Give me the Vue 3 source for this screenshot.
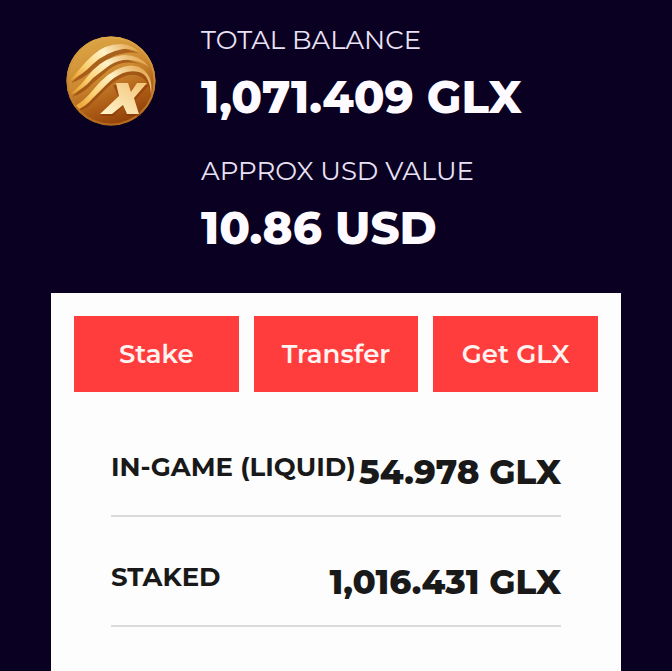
<!-- WalletBalance.vue -->
<template>
  <main class="wallet">
    <header class="wallet-header">
      <svg class="coin" viewBox="0 0 90 90" role="img" aria-label="GLX">
        <defs>
          <linearGradient id="coin-base" x1="0.2" y1="0" x2="0.6" y2="1">
            <stop offset="0" stop-color="#dda848" />
            <stop offset="0.45" stop-color="#cd8a30" />
            <stop offset="0.75" stop-color="#ad5c16" />
            <stop offset="1" stop-color="#8f3f08" />
          </linearGradient>
          <linearGradient id="coin-band" x1="0" y1="0.8" x2="1" y2="0.2">
            <stop offset="0" stop-color="#eda93a" />
            <stop offset="0.25" stop-color="#fbd275" />
            <stop offset="0.6" stop-color="#fff2c8" />
            <stop offset="1" stop-color="#e3a550" />
          </linearGradient>
          <linearGradient id="coin-rim" x1="0" y1="0" x2="0" y2="1">
            <stop offset="0" stop-color="#dca647" />
            <stop offset="1" stop-color="#b3691c" />
          </linearGradient>
          <linearGradient id="coin-mark" x1="0" y1="1" x2="1" y2="0">
            <stop offset="0" stop-color="#fff5cf" />
            <stop offset="1" stop-color="#f3c373" />
          </linearGradient>
        </defs>
        <circle cx="45" cy="45" r="44.5" fill="url(#coin-base)" />
        <g fill="#8f3f0a" opacity="0.6">
          <path d="M5 47Q16 36 27 26Q40 14 57 12L73 17Q58 15 46 21Q36 26 27 34Q17 43 5 47Z" />
          <path d="M6 61Q17 52 27 40Q40 27 57 22L82 31Q68 25 57 27Q47 29 40 36L27 47Q18 57 6 61Z" />
          <path d="M12 75Q21 68 27 60Q41 43 57 35L73 34Q83 38 85 58Q81 42 73 40Q65 37 57 41Q49 44 40 53L27 66Q21 73 12 75Z" />
        </g>
        <g fill="url(#coin-band)">
          <path d="M5 44Q15 30 27 19Q40 7 57 8Q67 9 74 17Q66 12 57 13Q40 16 27 28Q15 40 5 44Z" />
          <path d="M5 58Q17 47 27 34Q40 21 57 19Q73 18 83 31Q71 22 57 24Q47 26 40 32L27 42Q17 54 5 58Z" />
          <path d="M9 70Q18 65 27 54Q41 36 57 31Q66 28 73 31Q88 38 85 59Q84 39 73 36Q65 34 57 37Q49 40 40 49L27 62Q20 70 13 73Z" />
        </g>
        <circle cx="45" cy="45" r="43.5" fill="none" stroke="url(#coin-rim)" stroke-width="2" />
        <path
          d="M47 49H61L65 57L72 49H83L69 64L75 80H61L57 70L47 80H34L53 62Z"
          fill="#8a3706"
          opacity="0.6"
        />
        <path d="M50 47H62L65 56L71 47H81L68 62L73 78H61L57 69L46 78H34L53 60Z" fill="url(#coin-mark)" />
      </svg>
      <dl class="totals">
        <div v-for="total in totals" :key="total.label" class="total">
          <dt>{{ total.label }}</dt>
          <dd>{{ total.value }}</dd>
        </div>
      </dl>
    </header>

    <section class="card">
      <div class="actions">
        <button v-for="action in actions" :key="action" type="button" class="btn">
          {{ action }}
        </button>
      </div>
      <dl class="balances">
        <div v-for="balance in balances" :key="balance.label" class="balance">
          <dt>{{ balance.label }}</dt>
          <dd>{{ balance.value }}</dd>
        </div>
      </dl>
    </section>
  </main>
</template>

<script setup>
const totals = [
  { label: 'TOTAL BALANCE', value: '1,071.409 GLX' },
  { label: 'APPROX USD VALUE', value: '10.86 USD' },
]

const actions = ['Stake', 'Transfer', 'Get GLX']

const balances = [
  { label: 'IN-GAME (LIQUID)', value: '54.978 GLX' },
  { label: 'STAKED', value: '1,016.431 GLX' },
]
</script>

<style>
body {
  margin: 0;
  background-color: #090022;
}
</style>

<style scoped>
.wallet {
  box-sizing: border-box;
  display: flex;
  flex-direction: column;
  min-height: 100vh;
  padding: 24px 51px 0;
  font-family: Montserrat, Inter, 'Liberation Sans', sans-serif;
  color: #fdfbff;
}

dl,
dd {
  margin: 0;
}

.wallet-header {
  display: flex;
  align-items: flex-start;
  gap: 45px;
  padding: 0 15px;
}

.coin {
  flex: none;
  width: 90px;
  height: 90px;
  margin-top: 12px;
}

.totals {
  display: grid;
  gap: 30px;
}

.total dt {
  font-size: 26px;
  font-weight: 400;
  line-height: 32px;
  color: #e9e2f5;
}

.total dd {
  margin-top: 13px;
  font-size: 45px;
  font-weight: 800;
  line-height: 56px;
}

.card {
  flex: 1;
  margin-top: 37px;
  padding: 23px;
  background-color: #fdfdfd;
  color: #191919;
}

.actions {
  display: grid;
  grid-template-columns: repeat(3, 1fr);
  gap: 15px;
}

.btn {
  height: 76px;
  padding: 0;
  border: none;
  background-color: #ff3d3d;
  color: #fff3f1;
  font-family: inherit;
  font-size: 26px;
  font-weight: 600;
  cursor: pointer;
}

.btn:hover {
  background-color: #e93232;
}

.balances {
  padding: 15px 37px 0;
}

.balance {
  display: flex;
  justify-content: space-between;
  align-items: flex-start;
  padding: 44px 0 22px;
  border-bottom: 2px solid #dbdbdb;
  white-space: nowrap;
}

.balance dt {
  font-size: 26px;
  font-weight: 700;
  line-height: 32px;
}

.balance dd {
  font-size: 34px;
  font-weight: 800;
  line-height: 42px;
}
</style>
